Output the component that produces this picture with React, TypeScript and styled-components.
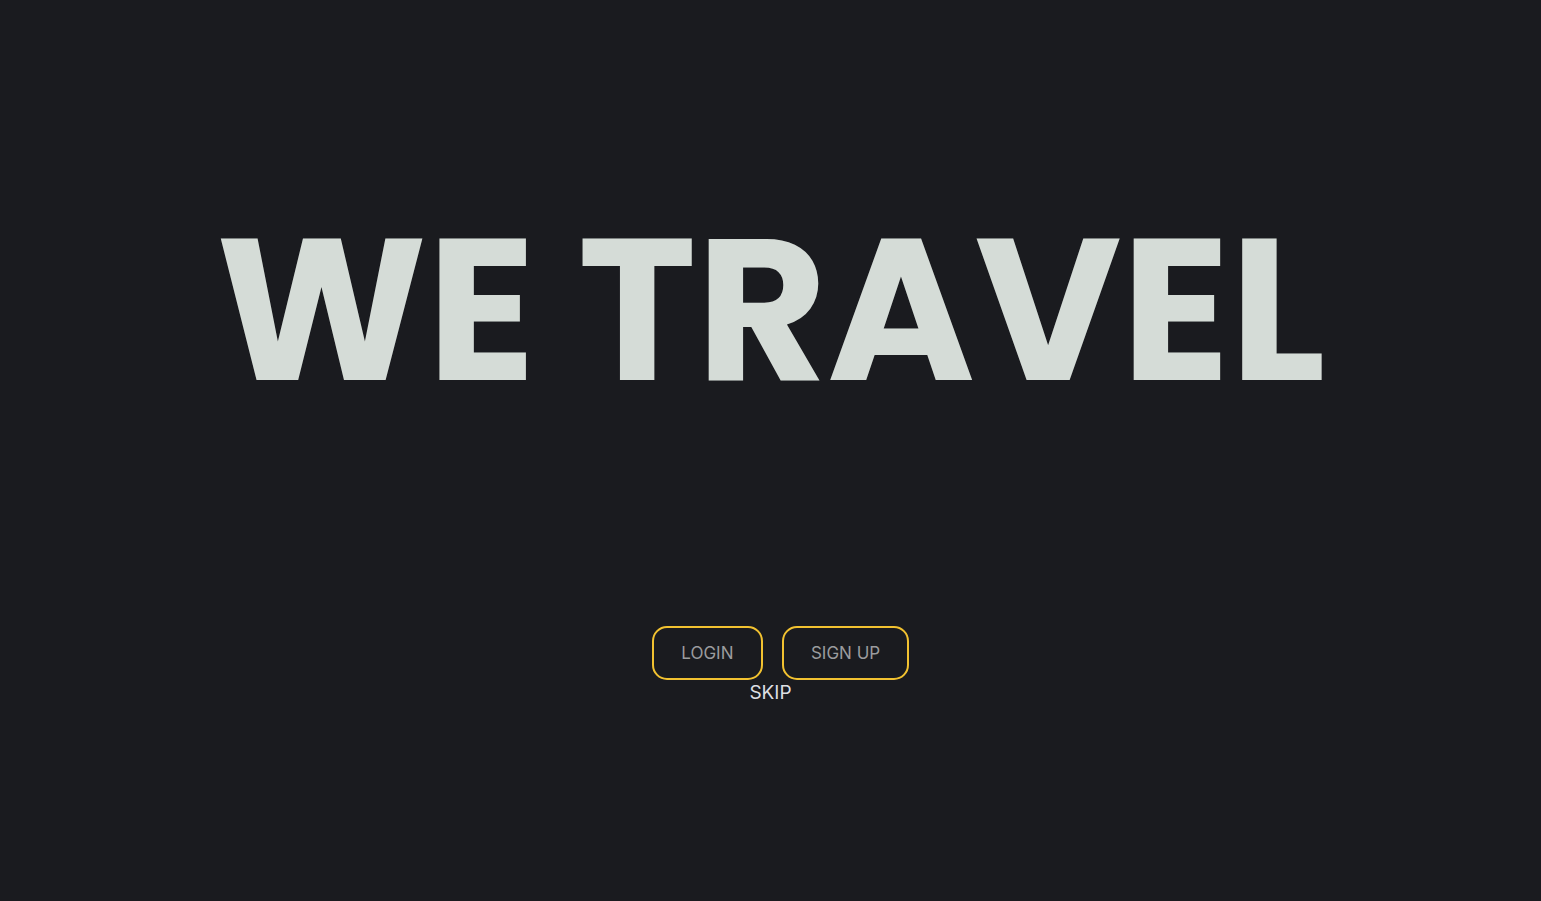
import React from "react";
import styled, { createGlobalStyle } from "styled-components";

const Global = createGlobalStyle`
  html, body { margin: 0; padding: 0; background: #1a1b1f; }
  body { font-family: Inter, "Liberation Sans", sans-serif; }
`;

const Page = styled.main`
  width: 100%;
  height: 901px;
  background: #1a1b1f;
  display: flex;
  flex-direction: column;
  align-items: center;
`;

const Title = styled.h1`
  margin: 195px 0 0 0;
  font-family: Poppins, Inter, "Open Sans", sans-serif;
  font-weight: 700;
  font-size: 201px;
  line-height: 230px;
  letter-spacing: -0.3px;
  color: #d5dcd7;
  white-space: nowrap;
`;

const Actions = styled.div`
  margin-top: 201px;
  display: flex;
  gap: 19px;
  padding-left: 20px;
`;

const Button = styled.button<{ $pad: number }>`
  height: 54px;
  padding: 0 ${(p) => p.$pad}px;
  border: 2px solid #f2c230;
  border-radius: 15px;
  background: transparent;
  color: #9b9c9e;
  font-family: Inter, "Liberation Sans", sans-serif;
  font-size: 17px;
  cursor: pointer;
`;

const Skip = styled.a`
  margin-top: 1px;
  color: #dedfe2;
  font-family: Inter, "Liberation Sans", sans-serif;
  font-size: 19px;
  text-decoration: none;
  cursor: pointer;
`;

export default function App() {
  return (
    <>
      <Global />
      <Page>
        <Title>WE TRAVEL</Title>
        <Actions>
          <Button $pad={27.5}>LOGIN</Button>
          <Button $pad={27}>SIGN UP</Button>
        </Actions>
        <Skip>SKIP</Skip>
      </Page>
    </>
  );
}
